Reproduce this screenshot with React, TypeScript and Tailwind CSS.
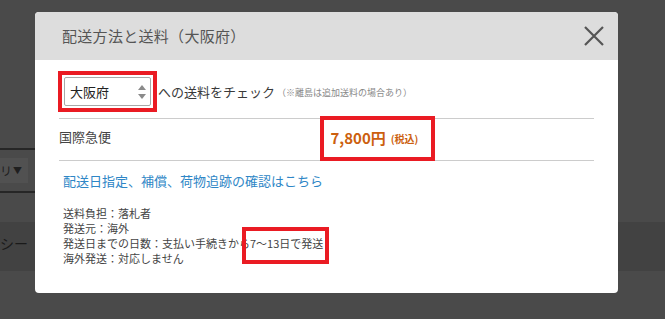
import React from "react";

const font = { fontFamily: '"Noto Sans CJK JP", "Noto Sans", sans-serif' };

const details = [
  "送料負担：落札者",
  "発送元：海外",
];

export default function App() {
  return (
    <div
      className="relative h-[319px] w-full overflow-hidden bg-[#4a4a4a]"
      style={font}
    >
      {/* page behind the overlay */}
      <div className="pt-[148px]">
        <div className="h-[2px] w-[200px] bg-[#262626]" />
        <div className="mt-[8px] flex h-[25px] w-[28px] items-center justify-end bg-[#515151] pr-[6px] text-[12px] text-[#1f1f1f]">
          <span>リ</span>
          <span className="ml-[1px] text-[9px]">▼</span>
        </div>
        <div className="mt-[8px] h-[2px] w-[200px] bg-[#262626]" />
        <div className="mt-[29px] flex h-[49px] items-center bg-[#424242] text-[14px] text-[#1a1a1a]">
          <span className="-mt-[6px]">シー</span>
        </div>
      </div>

      {/* modal */}
      <div className="absolute left-[35px] top-[12px] h-[281px] w-[583px] overflow-hidden rounded-[4px] bg-white">
        <div className="flex h-[48px] items-center justify-between bg-[#dddddd] pl-[27px] pr-[13px]">
          <h2 className="text-[15px] tracking-[0.3px] text-[#555555]">
            配送方法と送料（大阪府）
          </h2>
          <svg width="22" height="22" viewBox="0 0 22 22" className="text-[#555555]">
            <path
              d="M2 2 L20 20 M20 2 L2 20"
              stroke="currentColor"
              strokeWidth="2.2"
              fill="none"
            />
          </svg>
        </div>

        <div className="px-[24px] pt-[11px]">
          <div className="flex items-center">
            <div className="-ml-px border-4 border-[#ea1b23] p-[2px]">
              <div className="flex h-[29px] w-[87px] items-center justify-between rounded-[2px] border border-[#a9a9a9] pl-[5px] pr-[4px] text-[13px] text-[#222222]">
                <span>大阪府</span>
                <svg width="8" height="16" viewBox="0 0 8 16">
                  <path d="M4 1 L8 6 L0 6 Z" fill="#8a8a8a" />
                  <path d="M4 15 L8 10 L0 10 Z" fill="#8a8a8a" />
                </svg>
              </div>
            </div>
            <span className="ml-px text-[13px] text-[#3a3a3a]">への送料をチェック</span>
            <span className="ml-[2px] mt-[3px] text-[9px] text-[#888888]">
              （※離島は追加送料の場合あり）
            </span>
          </div>

          <div className="mt-[6px] grid h-[43px] grid-cols-2 border-y border-[#cccccc]">
            <div className="flex items-center pb-[5px] text-[13px] text-[#444444]">
              国際急便
            </div>
            <div className="relative flex items-center pb-[2px] pl-[4px]">
              <span className="text-[15px] font-bold text-[#cc5f0e]">7,800円</span>
              <span className="ml-[5px] text-[10px] font-bold text-[#cc5f0e]">(税込)</span>
              <div className="absolute -top-[3px] bottom-[-1px] left-[-7px] w-[115px] border-4 border-[#ea1b23]" />
            </div>
          </div>

          <div className="mt-[10px] pl-[4px] text-[13px] leading-[20px] text-[#2e86c6]">
            配送日指定、補償、荷物追跡の確認はこちら
          </div>

          <div className="mt-[15px] pl-[4px] text-[11px] leading-[15px] text-[#444444]">
            {details.map((d) => (
              <div key={d}>{d}</div>
            ))}
            <div>
              発送日までの日数：支払い手続きから
              <span className="relative">
                7〜13日で発送
                <span className="absolute -left-[8px] -right-[6px] -top-[8px] -bottom-[13px] border-4 border-[#ea1b23]" />
              </span>
            </div>
            <div>海外発送：対応しません</div>
          </div>
        </div>
      </div>
    </div>
  );
}
